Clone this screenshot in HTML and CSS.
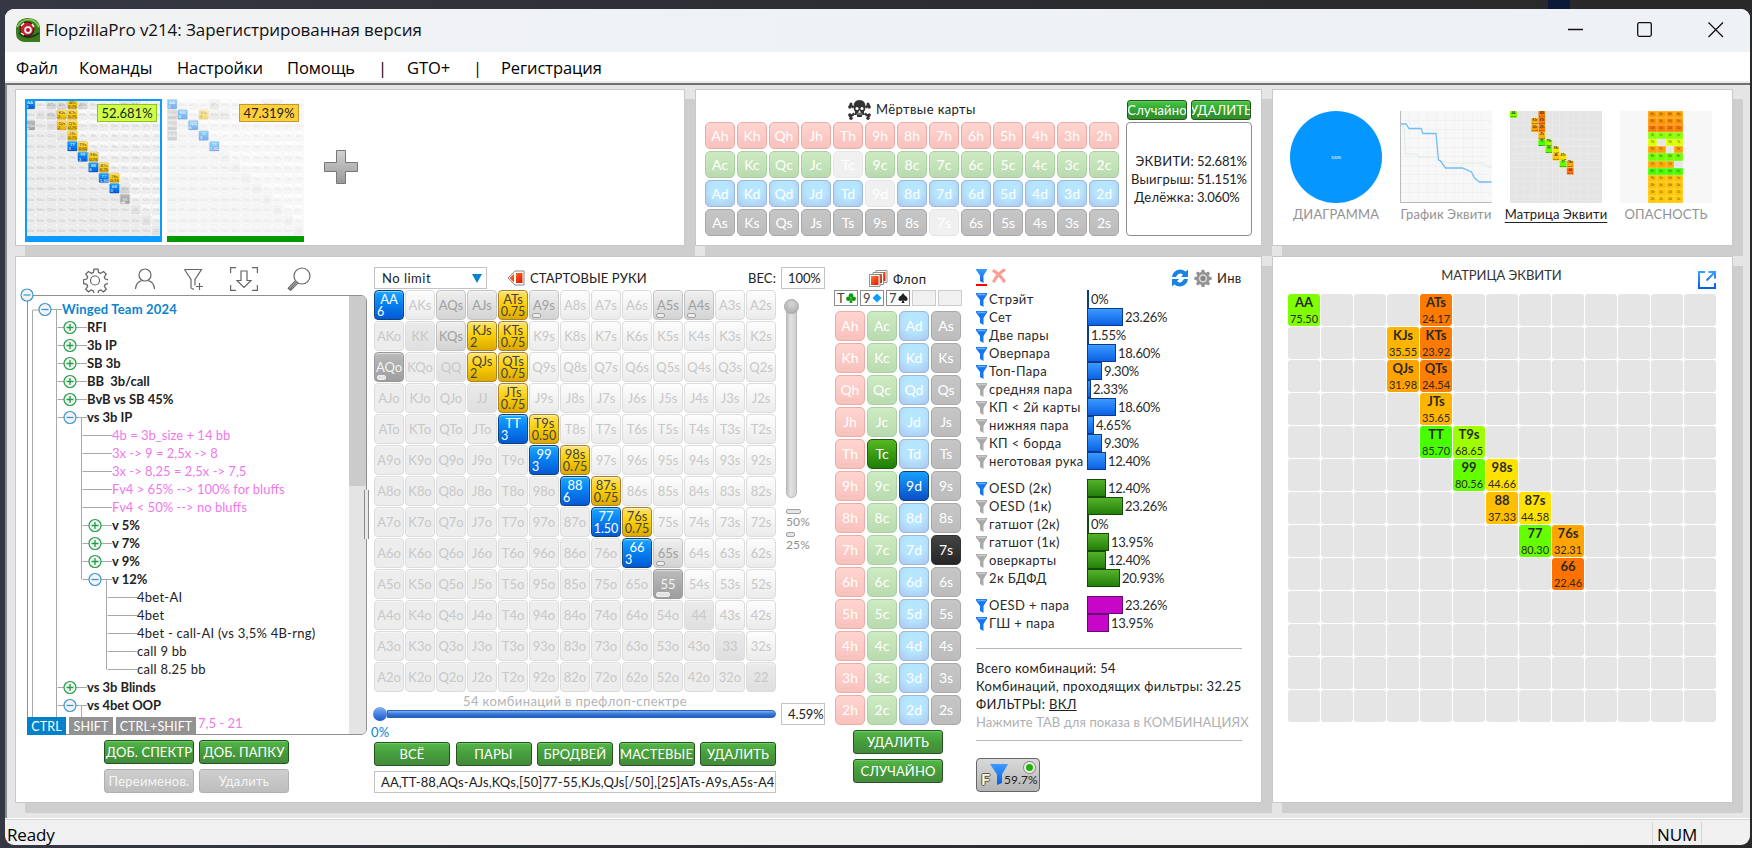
FILE: index.html
```html
<!DOCTYPE html>
<html lang="ru">
<head>
<meta charset="utf-8">
<title>FlopzillaPro v214</title>
<link rel="stylesheet" href="styles.css">
</head>
<body>
<svg class="defs" width="0" height="0">
  <defs>
    <linearGradient id="gBlue" x1="0" y1="0" x2="0" y2="1"><stop offset="0" stop-color="#3d9bff"/><stop offset="1" stop-color="#0560e8"/></linearGradient>
    <linearGradient id="gRed" x1="0" y1="0" x2="1" y2="1"><stop offset="0" stop-color="#ff7a33"/><stop offset="1" stop-color="#e01600"/></linearGradient>
    <linearGradient id="gGray" x1="0" y1="0" x2="0" y2="1"><stop offset="0" stop-color="#d2d2d2"/><stop offset="1" stop-color="#999"/></linearGradient>
    <symbol id="funnel" viewBox="0 0 11 14"><path d="M0 0h11v1.500L7.500 7v7L4 12V7L0 1.500z" fill="currentColor"/><path d="M1 .8h9L9.200 2.300H1.800z" fill="#fff" opacity=".4"/></symbol>
    <symbol id="cog" viewBox="0 0 24 24"><path d="M10.200 1h3.600l.6 3.100 1.900.8 2.700-1.700 2.400 2.400-1.700 2.700.8 1.900 3 .6v3.600l-3 .6-.8 1.900 1.700 2.700-2.400 2.400-2.700-1.700-1.900.8-.6 3h-3.600l-.6-3-1.900-.8L5 22 2.600 19.600l1.700-2.700-.8-1.900-3-.6v-3.600l3-.6.8-1.900L2.600 5.600 5 3.200l2.700 1.700 1.900-.8z"/></symbol>
  </defs>
</svg>
<div class="backdrop"><span class="backdrop-chip"></span></div>
<div class="window">
  <header class="titlebar">
    <svg class="app-icon" width="24" height="24" viewBox="0 0 24 24"><path d="M0 10Q1 1 11 0q12 0 13 10v14H8Q0 23 0 15z" fill="#3c7a1d"/><path d="M1 9Q5 2 12 1.500q8 0 11 8" fill="none" stroke="#8ed05a" stroke-width="1.500"/><path d="M3 15q9 8 20 0" fill="none" stroke="#1c3a0c" stroke-width="2"/><circle cx="11" cy="11" r="7.500" fill="#2a1a10"/><circle cx="11" cy="11" r="6.500" fill="#c8202c"/><circle cx="12" cy="12" r="3.800" fill="#fff"/><circle cx="12" cy="12" r="2" fill="#b01020"/><path d="M5 8l3-3M16 6l2 3M8 17l-3-2" stroke="#fff" stroke-width="1.500"/></svg>
    <h1 class="title">FlopzillaPro v214: Зарегистрированная версия</h1>
    <svg class="window-buttons" width="156" height="16" viewBox="0 0 156 16" fill="none" stroke="#111" stroke-width="1.300"><path d="M0 7.500h15"/><rect x="69.700" y=".7" width="13.600" height="13.600" rx="1.500"/><path d="M140.500.5l14.500 14.500M155 .5L140.500 15"/></svg>
  </header>
  <nav class="menu"><span>Файл</span><span>Команды</span><span>Настройки</span><span>Помощь</span><span>|</span><span>GTO+</span><span>|</span><span>Регистрация</span></nav>
  <main class="workspace">
    <section class="panel ranges">
      <div class="thumb thumb-active"><div class="thumb-view" id="thumbOne"></div><span class="badge badge-lime">52.681%</span></div>
      <div class="thumb thumb-second"><div class="thumb-view" id="thumbTwo"></div><span class="badge badge-amber">47.319%</span></div>
      <svg class="add-range" width="34" height="34" viewBox="0 0 34 34"><path d="M12.500.5h9v12h12v9h-12v12h-9v-12H.5v-9h12z" fill="url(#gGray)" stroke="#777"/></svg>
    </section>

    <section class="panel dead">
      <div class="dead-cards">
        <div class="dead-head">
          <svg width="23" height="20" viewBox="0 0 23 20" fill="#333"><path d="M5.500 7q0-7 6-7t6 7q0 3-1.500 4.500V15H14v2H9v-2H7v-3.500Q5.500 10 5.500 7z"/><circle cx="9" cy="8.500" r="1.500" fill="#fff"/><circle cx="14" cy="8.500" r="1.500" fill="#fff"/><path d="M11.500 10.500l1 2h-2zM8.500 14h6" fill="#fff" stroke="#fff" stroke-width=".6"/><path d="M1.500 4.500l4 3M21.500 4.500l-4 3M1.500 17l5-3.500M21.500 17l-5-3.500" stroke="#333" stroke-width="2.200"/><circle cx="1.800" cy="7" r="1.700"/><circle cx="3" cy="4" r="1.500"/><circle cx="21.200" cy="7" r="1.700"/><circle cx="20" cy="4" r="1.500"/><circle cx="1.800" cy="15" r="1.700"/><circle cx="3" cy="18.300" r="1.700"/><circle cx="21.200" cy="15" r="1.700"/><circle cx="20" cy="18.300" r="1.700"/></svg>
          <span>Мёртвые карты</span>
        </div>
        <div class="deck deck-wide" id="deadDeck"></div>
      </div>
      <div class="dead-side">
        <div class="dead-buttons"><button class="btn bright">Случайно</button><button class="btn bright">УДАЛИТЬ</button></div>
        <dl class="equity"><dt>ЭКВИТИ:</dt><dd>52.681%</dd><dt>Выигрыш:</dt><dd>51.151%</dd><dt>Делёжка:</dt><dd>3.060%</dd></dl>
      </div>
    </section>

    <section class="panel views">
      <figure><svg width="92" height="92" viewBox="0 0 92 92"><circle cx="46" cy="46" r="46" fill="#0597ff"/><text x="46" y="47.500" class="pie-label">100%</text></svg><figcaption>ДИАГРАММА</figcaption></figure>
      <figure><svg class="chart" width="92" height="92" viewBox="0 0 92 92"><rect width="92" height="92" fill="#f7f7f7"/><path d="M9.500 0v92M18.500 0v92M27.500 0v92M36.500 0v92M45.500 0v92M54.500 0v92M63.500 0v92M72.500 0v92M81.500 0v92M0 9.500h92M0 18.500h92M0 27.500h92M0 36.500h92M0 45.500h92M0 54.500h92M0 63.500h92M0 72.500h92M0 81.500h92" stroke="#f1f1f5" fill="none"/><path d="M0 15h4l1.500 28h11l2 3h18l4 4 10 2h33l3 3 6 2" fill="none" stroke="#dcecdc"/><path d="M0 13h6l3 4.500h12l2 5h13l2.500 26.500 2 1 5 7h17l9 4 3 6 5 4h12" fill="none" stroke="#6fbef7" stroke-width="1.300"/><path d="M.5 0v91.500H92" fill="none" stroke="#bbb"/></svg><figcaption>График Эквити</figcaption></figure>
      <figure><div class="mini-matrix" id="miniMatrix"></div><figcaption class="current">Матрица Эквити</figcaption></figure>
      <figure><div class="danger"><div class="danger-grid" id="dangerGrid"></div></div><figcaption>ОПАСНОСТЬ</figcaption></figure>
    </section>

    <section class="panel editor">
      <div class="tree-col">
        <div class="tools">
          <svg width="26" height="26" viewBox="-1 -1 26 26"><use href="#cog"/><circle cx="12" cy="12.500" r="4.500"/></svg>
          <svg width="22" height="24" viewBox="0 0 22 24"><circle cx="11" cy="8" r="6"/><path d="M1.500 22c.5-5.500 3-7.500 6-8.300M20.500 22c-.5-5.500-3-7.500-6-8.300"/></svg>
          <svg width="22" height="24" viewBox="0 0 22 24"><path d="M1.500 2.500h17l-6.500 10v6M1.500 2.500l6.500 10v8.500l3 1.500M16.500 16v7M13 19.500h7"/></svg>
          <svg width="28" height="24" viewBox="0 0 28 24"><path d="M.6 6V.6H6M22 .6h5.400V6M27.400 18v5.400H22M6 23.400H.6V18M11 4h6v9.500h4L14 20.500 7 13.500h4z"/></svg>
          <svg width="24" height="24" viewBox="0 0 24 24"><circle cx="15" cy="9" r="8"/><path d="M9.500 15l-7 7.500M8.200 13.800l-7 7.500 1.300 1.200M10.800 16.200l-7 7-1.300-.7"/></svg>
        </div>
        <div class="tree">
          <svg class="tree-lines" width="320" height="438" viewBox="0 0 320 438" id="treeLines"></svg>
          <div class="tree-rows" id="treeRows"></div>
          <div class="scrollbar"><div class="scroll-thumb"></div></div>
          <svg class="tree-root" width="14" height="14" viewBox="0 0 14 14"><circle cx="7" cy="7" r="6" fill="#f2f2f2" stroke="#3a97cf" stroke-width="1.200"/><path d="M3.500 7h7" stroke="#3a97cf" stroke-width="1.200"/></svg>
          <div class="key-tags"><span class="on">CTRL</span><span>SHIFT</span><span>CTRL+SHIFT</span></div>
          <div class="splitter"></div>
        </div>
        <div class="tree-buttons"><button class="btn">ДОБ. СПЕКТР</button><button class="btn">ДОБ. ПАПКУ</button><button class="btn off">Переименов.</button><button class="btn off">Удалить</button></div>
      </div>

      <div class="hands-col">
        <div class="hands-head">
          <div class="select">No limit<svg width="10" height="9" viewBox="0 0 10 9"><path d="M0 0h10L5 9z" fill="#0583d2"/></svg></div>
          <svg class="deck-icon" width="18" height="16" viewBox="0 0 18 16"><path d="M1 8l7-7h9v14H8z" fill="#fff" stroke="#888"/><path d="M2.500 8L7 3.500v9zM9 3h6.500v10H9z" fill="url(#gRed)"/></svg>
          <span>СТАРТОВЫЕ РУКИ</span>
          <span class="weight-label">ВЕС:</span>
        </div>
        <div class="hands" id="hands"></div>
        <div class="combo-count">54 комбинаций в префлоп-спектре</div>
        <div class="range-slider"><span class="range-knob"></span><span class="range-track"></span></div>
        <div class="range-min">0%</div>
        <div class="hand-buttons"><button class="btn">ВСЁ</button><button class="btn">ПАРЫ</button><button class="btn">БРОДВЕЙ</button><button class="btn">МАСТЕВЫЕ</button><button class="btn">УДАЛИТЬ</button></div>
        <div class="range-text">AA,TT-88,AQs-AJs,KQs,[50]77-55,KJs,QJs[/50],[25]ATs-A9s,A5s-A4s</div>
      </div>

      <div class="weight-col">
        <div class="box">100%</div>
        <div class="v-slider"><span class="v-knob"></span></div>
        <span class="pill"></span><span class="pill-label">50%</span>
        <span class="pill short"></span><span class="pill-label">25%</span>
        <div class="box percent">4.59%</div>
      </div>

      <div class="flop-col">
        <div class="flop-head"><svg width="19" height="17" viewBox="0 0 19 17" stroke="#777" stroke-width=".8"><path d="M7 .5h11v12H7z" fill="#fff"/><path d="M9 2h7.500v9H9z" fill="url(#gRed)" stroke="none"/><path d="M4 2.500h10.500v12H4z" fill="#fff"/><path d="M5.500 4H13v9H5.500z" fill="url(#gRed)" stroke="none"/><path d="M.5 4.500H11v12H.5z" fill="#fff"/><path d="M2 6h7.500v9H2z" fill="url(#gRed)" stroke="none"/></svg><span>Флоп</span></div>
        <div class="slots">
          <span>T<svg width="10" height="10" viewBox="0 0 10 10" fill="#0a9a0a"><circle cx="5" cy="2.500" r="2.300"/><circle cx="2.300" cy="5.700" r="2.200"/><circle cx="7.700" cy="5.700" r="2.200"/><path d="M4.500 5h1l1 5h-3z"/></svg></span>
          <span>9<svg width="10" height="10" viewBox="0 0 10 10" fill="#0c9cff"><path d="M5 .5L9.500 5 5 9.500.5 5z"/></svg></span>
          <span>7<svg width="10" height="10" viewBox="0 0 10 10" fill="#222"><path d="M5 0q1 2 3.500 3.800Q10.500 6 9 7.500 7.200 8.500 5.600 7l.9 3h-3l.9-3Q2.800 8.500 1 7.500-.5 6 1.500 3.800 4 2 5 0z"/></svg></span>
          <span class="empty"></span><span class="empty"></span>
        </div>
        <div class="deck deck-tall" id="flopDeck"></div>
        <div class="flop-buttons"><button class="btn">УДАЛИТЬ</button><button class="btn">СЛУЧАЙНО</button></div>
      </div>

      <div class="stats-col">
        <div class="stats-head">
          <svg class="filter-all" width="11" height="17" viewBox="0 0 11 17"><path d="M0 0h11v1L7.500 6.500V14L4 12V6.500L0 1z" fill="url(#gBlue)"/><path d="M0 15h11v2H0z" fill="#f00"/></svg>
          <svg class="clear" width="14" height="14" viewBox="0 0 14 14"><path d="M2 2q5 3 10 10M12 1Q6 5 2 12" stroke="#fa9e92" stroke-width="3.200" fill="none" stroke-linecap="round"/></svg>
          <svg class="refresh" width="18" height="18" viewBox="0 0 18 18"><path d="M1 8q1-7 8-7.500 3.500 0 5.500 2L17 .8V8H10l2-2.300Q8 2.500 5 8zM17 10q-1 7-8 7.500-3.500 0-5.500-2L1 17.200V10h7l-2 2.300q4 3.200 7-2.300z" fill="#1b83e3"/></svg>
          <svg width="18" height="18" viewBox="0 0 24 24"><use href="#cog" fill="#929292"/><circle cx="12" cy="12.500" r="5.500" fill="#ddd"/><circle cx="12" cy="12.500" r="3.500" fill="#888"/></svg>
          <span>Инв</span>
        </div>
        <div id="stats"></div>
        <div class="summary">
          <div>Всего комбинаций: 54</div>
          <div class="wide">Комбинаций, проходящих фильтры: 32.25</div>
          <div>ФИЛЬТРЫ: <u>ВКЛ</u></div>
          <div class="hint">Нажмите TAB для показа в КОМБИНАЦИЯХ</div>
        </div>
        <div class="filter-button">
          <span class="f-letter">F</span>
          <svg width="18" height="21" viewBox="0 0 18 21"><path d="M0 0h18l-6 10.500V19l-5 2V10.500z" fill="url(#gBlue)"/></svg>
          <span class="f-value">59.7%</span><i class="led"></i>
        </div>
      </div>
    </section>

    <section class="panel matrix-panel">
      <div class="matrix-head"><span>МАТРИЦА ЭКВИТИ</span><svg width="18" height="18" viewBox="0 0 18 18" fill="none" stroke="url(#gBlue)" stroke-width="2"><path d="M7 1H1v16h16v-5M10.500 1H17v6.500M17 1L8.500 9.500"/></svg></div>
      <div class="matrix" id="matrix"></div>
    </section>
  </main>
  <footer class="status"><span>Ready</span><span class="num">NUM</span></footer>
</div>
<script src="app.js"></script>
</body>
</html>
```

FILE: styles.css
```css
* { box-sizing: border-box; }
body {
  margin: 0; width: 1752px; height: 848px; overflow: hidden; position: relative;
  background: linear-gradient(90deg, #353743, #2b2c2f 60%, #292929);
  font: 13px/18px Lato, "Open Sans", sans-serif; color: #222; letter-spacing: .12px;
}
.defs { position: absolute; }
.backdrop { position: absolute; top: 0; left: 1548px; }
.backdrop-chip { display: block; width: 22px; height: 9px; background: #0b1a38; }
button { font: inherit; letter-spacing: inherit; padding: 0; }
.window { position: absolute; left: 5px; top: 9px; width: 1745px; height: 836px; border-radius: 9px; overflow: hidden; background: #f0f0f0; display: flex; flex-direction: column; }
.titlebar { height: 43px; flex: none; display: flex; align-items: center; padding: 0 26px 5px 11px; background: linear-gradient(90deg, #f2f2f2, #eef2f7 45%); }
.app-icon { margin-top: 3px; }
.title { margin: 3px auto 0 5px; font: 400 17px/24px "Open Sans", sans-serif; letter-spacing: -.07px; color: #111; }
.window-buttons { margin-top: 3px; }
.menu { height: 31px; flex: none; padding: 3px 0 0 11px; background: #fff; border-bottom: 2px solid #ececec; display: grid; grid-template-columns: 63px 98px 110px 92px 28px 69px 25px 120px; font: 16.500px/25px "Open Sans", sans-serif; color: #000; letter-spacing: -.08px; }
.menu span:nth-child(5) { text-indent: -1px; }
.menu span:nth-child(7) { text-indent: -3px; }
.workspace { height: 735px; flex: none; border-top: 2px solid #717171; border-left: 2px solid #8a8a8a; background: #e5e5e5; padding: 4px 0 0 8px; display: grid; grid-template-columns: 670px 567px 461px; grid-template-rows: 157px 547px; gap: 10px; }
.panel { background: #fff; border: 1px solid #c8c8c8; box-shadow: 10px 10px 0 #cecece; position: relative; min-width: 0; }
.status { flex: 1; border-top: 1px solid #fff; box-shadow: inset 0 1px 0 #d5d5d5; padding: 3px 0 0 2px; display: flex; font: 17px/26px "Open Sans", sans-serif; color: #000; letter-spacing: -.15px; }
.status .num { margin-left: auto; margin-right: 48px; border: solid #d5d5d5; border-width: 0 1px; width: 50px; height: 22px; padding-left: 4px; }

/* range thumbnails */
.ranges { display: flex; padding: 9px; gap: 5px; }
.thumb { width: 137px; height: 143px; position: relative; overflow: hidden; }
.thumb-view { width: 137px; height: 137px; overflow: hidden; }
.thumb-view .hands { transform: scale(.34); transform-origin: 0 0; }
.thumb-active::after { content: ""; position: absolute; inset: 0; border: 2px solid #0a9bff; border-bottom-width: 6px; }
.thumb-second { border-bottom: 6px solid #009a00; }
.thumb-second .hands { opacity: .5; }
.badge { position: absolute; right: 5px; top: 5px; width: 60px; height: 18px; border: 1px solid; font-size: 13px; line-height: 17px; text-align: center; letter-spacing: 0; }
.badge-lime { background: #ccff47; border-color: #99bf24; }
.badge-amber { background: #ffce3c; border-color: #c29a2c; }
.add-range { margin: 51px 0 0 15px; }

/* buttons */
.btn { display: flex; align-items: center; justify-content: center; width: 90px; height: 24px; border: 1px solid #24541f; border-radius: 3px; background: linear-gradient(#55b748, #459d3b 50%, #448a3b); color: #fff; overflow: hidden; white-space: nowrap; box-shadow: inset 0 1px 0 #6cc860; }
.btn.bright { width: 60px; height: 20px; background: linear-gradient(#43c943, #34a030 50%, #318e28); }
.btn.off { background: linear-gradient(#cfcfcf, #bdbdbd); border-color: #b0b0b0; box-shadow: none; color: #f5f5f5; letter-spacing: .25px; }

/* dead cards */
.dead { display: flex; padding: 10px 9px; justify-content: space-between; }
.dead-head { height: 22px; display: flex; gap: 5px; padding-left: 143px; line-height: 19px; letter-spacing: .4px; }
.deck { display: grid; color: #fff; line-height: 28px; text-align: center; font-size: 14px; letter-spacing: 0; }
.deck-wide { grid-template-columns: repeat(13, 30px); gap: 2px; }
.deck-wide .card { height: 27px; line-height: 26px; }
.deck-tall { grid-template-columns: repeat(4, 30px); gap: 2px; }
.card { height: 30px; border: 1px solid; border-radius: 5px; }
.card.h { background: linear-gradient(#ffd5cf, #f8c1bd); border-color: #eeaaa7; }
.card.c { background: linear-gradient(#cdebc0, #b9dab0); border-color: #abd0a2; }
.card.d { background: radial-gradient(circle at 50% 35%, #b6e6ff 45%, #adc4ef); border-color: #9ab8d8; }
.card.s { background: linear-gradient(#c6c6c6, #bcbcbc); border-color: #a8a8a8; }
.deck-wide .card.gone { background: #f0f0f0; border-color: #e6e6e6; }
.deck-tall .card.c.pick { background: linear-gradient(#55b822, #1e7e05); border-color: #1b5d0c; }
.deck-tall .card.d.pick { background: linear-gradient(#16a0ff, #0a4fc6); border-color: #123f78; }
.deck-tall .card.s.pick { background: linear-gradient(#444, #262626); border-color: #333; }
.dead-side { width: 126px; }
.dead-buttons { display: flex; gap: 4px; padding-left: 1px; height: 22px; }
.equity { margin: 0; height: 114px; border: 1px solid #8e8e8e; border-radius: 4px; display: grid; grid-template-columns: 67px 1fr; grid-auto-rows: 18px; align-content: center; column-gap: 3px; letter-spacing: 0; }
.equity dt { text-align: right; letter-spacing: .25px; }
.equity dd { margin: 0; letter-spacing: -.2px; }

/* view picker */
.views { padding: 21px 0 0 17px; display: flex; gap: 18px; }
.views figure { margin: 0; width: 92px; }
.views svg { display: block; }
.views figcaption { color: #929292; text-align: center; margin: 3px -10px 0; white-space: nowrap; line-height: 17px; letter-spacing: .15px; }
.views .current { color: #222; text-decoration: underline; text-underline-offset: 3px; }
.pie-label { font: 4px Lato, sans-serif; letter-spacing: 0; fill: #fff; text-anchor: middle; }
.mini-matrix { width: 92px; height: 92px; overflow: hidden; background: #f0f0f0; }
.mini-matrix .matrix { transform: scale(.215); transform-origin: 0 0; }
.danger { height: 92px; background: #f7f7f7; padding-left: 28px; }
.danger-grid { display: grid; grid-template-columns: repeat(4, 1fr); grid-template-rows: repeat(13, minmax(0, 1fr)); width: 35px; height: 92px; font-size: 3px; line-height: 6px; text-align: center; color: #5a4a00; letter-spacing: 0; }
.danger-grid div { box-shadow: inset 0 0 0 .5px #ffffff50; }
.danger-grid .hole { background: #e5e5e5; }

/* editor */
.editor { display: flex; grid-column: span 2; }
.editor > div { flex: none; }
.tree-col { width: 358px; padding-left: 11px; }
.tools { height: 38px; display: flex; align-items: flex-start; padding: 10px 0 0 55px; }
.tools svg { flex: none; fill: none; stroke: #666; stroke-width: 1.200; margin-right: 26px; }
.tools svg:nth-child(2) { margin-right: 27px; }
.tools svg:nth-child(3) { margin-right: 25px; }
.tools svg:nth-child(4) { margin: 0 29px 0 0; }
.tree { position: relative; width: 340px; height: 440px; border: 1px solid #909090; border-radius: 0 6px 6px 0; }
.tree-lines { position: absolute; left: 0; top: 0; }
.tree-rows { position: relative; padding-top: 4px; height: 438px; overflow: hidden; }
.tree-row { height: 18px; line-height: 18px; white-space: pre; letter-spacing: .25px; }
.tree-row.b { font-weight: 700; letter-spacing: -.03px; }
.tree-row.top { color: #0a84cf; letter-spacing: .18px; }
.tree-row.note { color: #f277ec; letter-spacing: 0; }
.scrollbar { position: absolute; right: 0; top: 0; bottom: 0; width: 17px; background: #e4e4e4; border-radius: 0 5px 5px 0; overflow: hidden; }
.scroll-thumb { height: 190px; background: #cbcbcb; }
.tree-root { position: absolute; left: -8px; top: -8px; }
.key-tags { position: absolute; left: -1px; bottom: -1px; display: flex; gap: 3px; }
.key-tags span { height: 18px; background: #929292; color: #fff; width: 44px; text-align: center; line-height: 19px; font-size: 12.500px; }
.key-tags span:last-child { width: 80px; }
.key-tags .on { width: 39px; background: #0082ca; }
.splitter { position: absolute; right: -3px; top: 194px; width: 5px; height: 49px; border: solid #888; border-width: 0 1px; background: #e8e8e8; }
.tree-buttons { display: grid; grid-template-columns: 90px 90px; gap: 5px; padding: 5px 0 0 77px; }

.hands-col { width: 402px; padding-top: 10px; }
.hands-head { height: 23px; display: flex; align-items: flex-start; line-height: 22px; white-space: nowrap; }
.select { width: 113px; height: 22px; border: 1px solid #c2c2c2; display: flex; justify-content: space-between; align-items: center; padding: 0 4px 0 7px; line-height: 20px; letter-spacing: .5px; }
.deck-icon { margin: 3px 5px 0 20px; }
.weight-label { margin-left: auto; }
.hands { display: grid; grid-template-columns: repeat(13, 30px); grid-auto-rows: 30px; gap: 1px; width: 403px; }
.hand { border: 1px solid #dcdcdc; border-radius: 4px; font-size: 13px; line-height: 29px; text-align: center; color: #c8c8c8; background: #ededed; position: relative; white-space: nowrap; letter-spacing: -.05px; box-shadow: inset 0 1px 1px #fff8; }
.hand.suited { background: linear-gradient(#fdfdfd, #ebebeb); }
.hand.pair { background: linear-gradient(#eaeaea, #dfdfdf); }
.hand.dim { background: linear-gradient(#efefef, #d3d3d3); border-color: #c2c2c2; color: #a0a0a0; }
.hand.dark { background: linear-gradient(#bababa, #9e9e9e); border-color: #999; color: #f3f3f3; }
.hand.blue { background: linear-gradient(#1ca7ff, #0785f5 40%, #0459d4); border-color: #0b447c; color: #fff; line-height: 13px; padding-top: 2px; }
.hand.gold { background: linear-gradient(#ffe36b, #fcd008 45%, #dca800); border-color: #a8822c; color: #444; line-height: 13px; padding-top: 2px; }
.hand b { display: block; font-weight: 400; line-height: 12px; font-size: 12.500px; }
.hand b.left { text-align: left; padding-left: 2px; }
.mark { position: absolute; left: 2px; bottom: 1px; width: 9px; height: 5px; border: 1px solid #a0a0a0; border-radius: 2px; background: #eee; }
.dark .mark { background: #e2e2e2; border-color: #eee; }
.mark.long { width: 14px; }
.combo-count { height: 18px; text-align: center; color: #b3b3b3; line-height: 19px; letter-spacing: .4px; }
.range-slider { height: 8px; display: flex; align-items: center; margin-left: -1px; }
.range-knob { width: 14px; height: 14px; border-radius: 50%; background: linear-gradient(#7db0f5, #1758cd); flex: none; }
.range-track { flex: 1; height: 8px; border: 1px solid #2a64b8; border-radius: 0 4px 4px 0; background: linear-gradient(#7fb1f2, #3677d6 50%, #2461c6); }
.range-min { height: 24px; line-height: 28px; color: #0a84cf; margin-left: -3px; }
.hand-buttons { display: flex; justify-content: space-between; }
.hand-buttons .btn { width: 76px; }
.range-text { margin-top: 5px; height: 22px; line-height: 20px; border: 1px solid #c2c2c2; padding-left: 6px; overflow: hidden; white-space: nowrap; letter-spacing: .1px; }
.weight-col { width: 58px; padding: 10px 0 0 5px; display: flex; flex-direction: column; align-items: flex-start; }
.weight-col > * { flex: none; }
.box { width: 44px; height: 22px; border: 1px solid #c2c2c2; line-height: 20px; padding-left: 6px; overflow: hidden; letter-spacing: -.1px; }
.v-slider { margin: 17px 0 11px 5px; width: 11px; height: 192px; background: linear-gradient(90deg, #c2c2c2, #e2e2e2 40%, #cfcfcf); border: 1px solid #bababa; border-radius: 5px; position: relative; }
.v-knob { position: absolute; left: -3px; top: -8px; width: 15px; height: 15px; border-radius: 50%; background: radial-gradient(circle at 50% 30%, #d5d5d5, #a9a9a9); border: 1px solid #a5a5a5; }
.pill { width: 15px; height: 5px; margin-left: 5px; border: 1px solid #a0a0a0; border-radius: 2px; background: #e6e6e6; }
.pill.short { width: 9px; }
.pill-label { margin-left: 5px; color: #8f8f8f; font-size: 12px; line-height: 16px; height: 18px; }
.box.percent { margin-top: 148px; }

.flop-col { width: 138px; padding-top: 13px; }
.flop-head { height: 20px; display: flex; gap: 5px; padding-left: 35px; letter-spacing: .4px; }
.slots { display: flex; gap: 2px; height: 21px; }
.slots span { width: 24px; height: 16px; border: 1px solid #8d8d8d; line-height: 14px; display: flex; align-items: center; padding-left: 2px; color: #444; gap: 1px; }
.slots .empty { background: #f0f0f0; border-color: #ccc; }
.deck-tall { padding-left: 1px; }
.flop-buttons { padding: 5px 0 0 19px; display: grid; gap: 5px; }

.stats-col { width: 284px; padding: 12px 0 0 4px; }
.stats-head { height: 21px; display: flex; align-items: flex-start; gap: 5px; width: 266px; }
.refresh { margin-left: auto; }
.stats-head span { width: 25px; letter-spacing: .3px; }
.stat { height: 18px; display: flex; align-items: center; color: #2a2a2a; white-space: nowrap; letter-spacing: -.25px; }
.stat svg { color: #1277f0; margin: 1px 2px 0 0; }
.stat.off svg { color: #a9a9a9; }
.stat .name { width: 98px; letter-spacing: .35px; }
.bar { height: 18px; border: 1px solid #0c3a8c; background: linear-gradient(#3b9aff, #0a62e6); margin-right: 2px; flex: none; }
.green .bar { background: linear-gradient(#55b22a, #237f0a); border-color: #124d08; }
.magenta .bar { background: #c806c8; border-color: #640a78; }
.gap { height: 9px; }
.summary { width: 266px; margin-top: 16px; border: solid #b5b5b5; border-width: 1px 0; height: 93px; padding-top: 10px; white-space: nowrap; letter-spacing: .33px; }
.hint { color: #b0b0b0; letter-spacing: .07px; }
.filter-button { margin-top: 17px; width: 64px; height: 34px; border: 1px solid #666; border-radius: 4px; background: linear-gradient(#d9d9d9, #b5b5b5); display: flex; position: relative; padding: 5px 0 0 4px; }
.filter-button svg { flex: none; }
.f-letter { color: #fff6d0; font-weight: 700; font-size: 16px; line-height: 30px; text-shadow: 1px 0 #555, -1px 0 #555, 0 1px #555, 0 -1px #555; width: 9px; }
.f-value { font-size: 12px; line-height: 31px; margin-left: -4px; letter-spacing: .1px; }
.led { position: absolute; right: 4px; top: 3px; width: 11px; height: 11px; border-radius: 50%; background: #1db400; border: 2px solid #eee; box-shadow: 0 0 0 1px #888; }

/* equity matrix */
.matrix-panel { padding: 10px 16px 0 15px; }
.matrix-head { height: 27px; display: flex; justify-content: center; position: relative; line-height: 17px; color: #333; letter-spacing: -.05px; padding-right: 1px; }
.matrix-head svg { position: absolute; right: 0; top: 4px; }
.matrix { display: grid; grid-template-columns: repeat(13, 32px); grid-auto-rows: 32px; gap: 1px; width: 428px; }
.eq { background: #e5e5e5; border-radius: 3px; text-align: center; font-size: 11px; line-height: 15px; color: #2a2a2a; letter-spacing: 0; }
.eq b { display: block; font-size: 13px; line-height: 17px; letter-spacing: 0; }
```

FILE: app.js
```javascript
const RANKS = 'AKQJT98765432'.split('');
const byId = (id) => document.getElementById(id);

function handName(row, col) {
  if (row === col) return RANKS[row] + RANKS[col];
  return row < col ? RANKS[row] + RANKS[col] + 's' : RANKS[col] + RANKS[row] + 'o';
}

function handGrid(range) {
  let html = '';
  for (let r = 0; r < 13; r++) {
    for (let c = 0; c < 13; c++) {
      const name = handName(r, c);
      const weight = range.weights[name];
      const kind = r === c ? 'pair' : r < c ? 'suited' : '';
      if (weight) {
        const color = r === c ? 'blue' : 'gold';
        const align = weight.length > 3 ? '' : 'left';
        html += `<div class="hand ${color}">${name}<b class="${align}">${weight}</b></div>`;
      } else {
        const tone = range.dark.includes(name) ? 'dark' : range.dim.includes(name) ? 'dim' : '';
        const mark = range.marks[name] ? `<i class="mark ${range.marks[name]}"></i>` : '';
        html += `<div class="hand ${kind} ${tone}">${name}${mark}</div>`;
      }
    }
  }
  return html;
}

const heroRange = {
  weights: { AA: '6', ATs: '0.75', KJs: '2', KTs: '0.75', QJs: '2', QTs: '0.75', JTs: '0.75', TT: '3', T9s: '0.50',
    99: '3', '98s': '0.75', 88: '6', '87s': '0.75', 77: '1.50', '76s': '0.75', 66: '3' },
  dark: ['AQo', '55'],
  dim: ['AQs', 'AJs', 'A9s', 'A5s', 'A4s', 'KQs', '65s'],
  marks: { A9s: 'short', A5s: 'short', A4s: 'short', AQo: 'short', '65s': 'short', 55: 'long' }
};
const villainRange = {
  weights: { AA: '3', KK: '6', QQ: '6', JJ: '3', TT: '1.50', KJs: '2' },
  dark: ['AKo', 'AQo', 'AJo'],
  dim: ['A5s', 'A4s', 'ATs', 'KTs', 'K9s'],
  marks: {}
};
byId('hands').innerHTML = handGrid(heroRange);
byId('thumbOne').innerHTML = `<div class="hands">${handGrid(heroRange)}</div>`;
byId('thumbTwo').innerHTML = `<div class="hands">${handGrid(villainRange)}</div>`;

const board = ['Tc', '9d', '7s'];
byId('deadDeck').innerHTML = ['h', 'c', 'd', 's'].map((s) => RANKS.map((r) =>
  `<div class="card ${s} ${board.includes(r + s) ? 'gone' : ''}">${r}${s}</div>`).join('')).join('');
byId('flopDeck').innerHTML = RANKS.map((r) => ['h', 'c', 'd', 's'].map((s) =>
  `<div class="card ${s} ${board.includes(r + s) ? 'pick' : ''}">${r}${s}</div>`).join('')).join('');

const equities = {
  AA: ['75.50', '#80ff00'], ATs: ['24.17', '#ff7b00'], KJs: ['35.55', '#ffb400'], KTs: ['23.92', '#ff7a00'],
  QJs: ['31.98', '#ffa300'], QTs: ['24.54', '#ff7d00'], JTs: ['35.65', '#ffb500'], TT: ['85.70', '#48ff00'],
  T9s: ['68.65', '#9fff00'], 99: ['80.56', '#63ff00'], '98s': ['44.66', '#ffe300'], 88: ['37.33', '#ffbe00'],
  '87s': ['44.58', '#ffe200'], 77: ['80.30', '#65ff00'], '76s': ['32.31', '#ffa400'], 66: ['22.46', '#ff7200']
};
let cells = '';
for (let r = 0; r < 13; r++) {
  for (let c = 0; c < 13; c++) {
    const name = handName(r, c);
    const e = equities[name];
    cells += e ? `<div class="eq" style="background:${e[1]}"><b>${name}</b>${e[0]}</div>` : '<div class="eq"></div>';
  }
}
byId('matrix').innerHTML = cells;
byId('miniMatrix').innerHTML = `<div class="matrix">${cells}</div>`;

const dangerRows = ['#ff9d00', '#ff9200', '#ff7d00', '#8cff00', '#dcff00', '#ffa000', '#6fff00', '#ffaa00', '#42ff00', '#ffc000', '#ffc000', '#ffc400', '#ffc800'];
byId('dangerGrid').innerHTML = dangerRows.map((color, i) => ['h', 'c', 'd', 's'].map((s) => {
  const card = RANKS[i] + s;
  return board.includes(card) ? '<div class="hole"></div>' : `<div style="background:${color}">${card}</div>`;
}).join('')).join('');

/* depth, label, node kind ('+', '-', or none), style */
const tree = [
  [0, 'Winged Team 2024', '-', 'b top'], [1, 'RFI', '+', 'b'], [1, '3b IP', '+', 'b'], [1, 'SB 3b', '+', 'b'],
  [1, 'BB  3b/call', '+', 'b'], [1, 'BvB vs SB 45%', '+', 'b'], [1, 'vs 3b IP', '-', 'b'],
  [2, '4b = 3b_size + 14 bb', '', 'note'], [2, '3x -> 9 = 2,5x -> 8', '', 'note'], [2, '3x -> 8,25 = 2,5x -> 7,5', '', 'note'],
  [2, 'Fv4 > 65% --> 100% for bluffs', '', 'note'], [2, 'Fv4 < 50% --> no bluffs', '', 'note'],
  [2, 'v 5%', '+', 'b'], [2, 'v 7%', '+', 'b'], [2, 'v 9%', '+', 'b'], [2, 'v 12%', '-', 'b'],
  [3, '4bet-AI', '', ''], [3, '4bet', '', ''], [3, '4bet - call-AI (vs 3,5% 4B-rng)', '', ''], [3, 'call 9 bb', '', ''], [3, 'call 8.25 bb', '', ''],
  [1, 'vs 3b Blinds', '+', 'b'], [1, 'vs 4bet OOP', '-', 'b'], [5.440, '7,5 - 21', '', 'note']
];
let lines = '<path d="M4.500 438V14H11"/>';
let nodes = '';
byId('treeRows').innerHTML = tree.map(([depth, label, node, style], i) => {
  const x = 34 + depth * 25;
  const y = 13.5 + i * 18;
  if (i < 23) {
    lines += `<path d="M${x - (depth ? 29.5 : 23)} ${y}H${x}"/>`;
    if (node) {
      const cx = x - 17;
      const color = node === '+' ? '#1f9e45' : '#3a97cf';
      nodes += `<circle cx="${cx}" cy="${y}" r="6" fill="#f4f4f4" stroke="${color}" stroke-width="1.2"/><path d="M${cx - 3.5} ${y}h7${node === '+' ? `M${cx} ${y - 3.5}v7` : ''}" stroke="${color}" stroke-width="1.3"/>`;
    }
  }
  return `<div class="tree-row ${style}" style="padding-left:${x}px">${label}</div>`;
}).join('');
lines += '<path d="M28.500 13.500V438M53.500 121.500V283.500M78.500 283.500V373.500M53.500 409.500V438"/>';
byId('treeLines').innerHTML = `<g fill="none" stroke="#a8a8a8">${lines}</g>${nodes}`;

/* label, share, bar width, filter active */
const groups = [
  ['blue', [['Стрэйт', '0%', 1, 1], ['Сет', '23.26%', 36, 1], ['Две пары', '1.55%', 2, 1], ['Оверпара', '18.60%', 29, 1], ['Топ-Пара', '9.30%', 15, 1],
    ['средняя пара', '2.33%', 4, 0], ['КП < 2й карты', '18.60%', 29, 0], ['нижняя пара', '4.65%', 7, 0], ['КП < борда', '9.30%', 15, 0], ['неготовая рука', '12.40%', 19, 0]]],
  ['green', [['OESD (2к)', '12.40%', 19, 1], ['OESD (1к)', '23.26%', 36, 0], ['гатшот (2к)', '0%', 1, 0], ['гатшот (1к)', '13.95%', 22, 0], ['оверкарты', '12.40%', 19, 0], ['2к БДФД', '20.93%', 33, 0]]],
  ['magenta', [['OESD + пара', '23.26%', 36, 1], ['ГШ + пара', '13.95%', 22, 1]]]
];
byId('stats').innerHTML = groups.map(([color, rows]) => rows.map(([name, share, width, active]) =>
  `<div class="stat ${color} ${active ? '' : 'off'}"><svg width="11" height="14"><use href="#funnel"/></svg><span class="name">${name.replace('<', '&lt;')}</span><span class="bar" style="width:${width}px"></span>${share}</div>`).join('')).join('<div class="gap"></div>');
```
